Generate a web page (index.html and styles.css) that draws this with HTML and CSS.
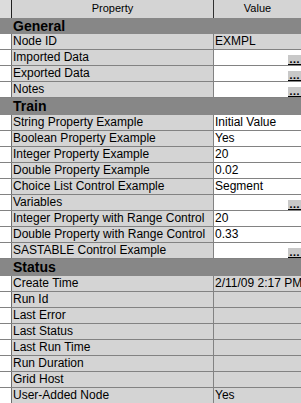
FILE: index.html
```html
<!DOCTYPE html>
<html lang="en">
<head>
  <meta charset="UTF-8" />
  <title>Properties</title>
  <link rel="stylesheet" href="styles.css">
</head>
<body>
  <div class="grid">
    <div class="head">
      <div class="gutter"></div>
      <div class="name">Property</div>
      <div class="value">Value</div>
    </div>

    <div class="cat">General</div>
    <div class="row"><div class="gutter"></div><div class="name">Node ID</div><div class="value ro">EXMPL</div></div>
    <div class="row"><div class="gutter"></div><div class="name">Imported Data</div><div class="value"><span class="more">...</span></div></div>
    <div class="row"><div class="gutter"></div><div class="name">Exported Data</div><div class="value"><span class="more">...</span></div></div>
    <div class="row"><div class="gutter"></div><div class="name">Notes</div><div class="value"><span class="more">...</span></div></div>

    <div class="cat tall">Train</div>
    <div class="row"><div class="gutter"></div><div class="name">String Property Example</div><div class="value">Initial Value</div></div>
    <div class="row"><div class="gutter"></div><div class="name">Boolean Property Example</div><div class="value">Yes</div></div>
    <div class="row"><div class="gutter"></div><div class="name">Integer Property Example</div><div class="value">20</div></div>
    <div class="row"><div class="gutter"></div><div class="name">Double Property Example</div><div class="value">0.02</div></div>
    <div class="row"><div class="gutter"></div><div class="name">Choice List Control Example</div><div class="value">Segment</div></div>
    <div class="row"><div class="gutter"></div><div class="name">Variables</div><div class="value"><span class="more">...</span></div></div>
    <div class="row"><div class="gutter"></div><div class="name">Integer Property with Range Control</div><div class="value">20</div></div>
    <div class="row"><div class="gutter"></div><div class="name">Double Property with Range Control</div><div class="value">0.33</div></div>
    <div class="row"><div class="gutter"></div><div class="name">SASTABLE Control Example</div><div class="value"><span class="more">...</span></div></div>

    <div class="cat tall">Status</div>
    <div class="row"><div class="gutter"></div><div class="name">Create Time</div><div class="value ro">2/11/09 2:17 PM</div></div>
    <div class="row"><div class="gutter"></div><div class="name">Run Id</div><div class="value ro"></div></div>
    <div class="row"><div class="gutter"></div><div class="name">Last Error</div><div class="value ro"></div></div>
    <div class="row"><div class="gutter"></div><div class="name">Last Status</div><div class="value ro"></div></div>
    <div class="row"><div class="gutter"></div><div class="name">Last Run Time</div><div class="value ro"></div></div>
    <div class="row"><div class="gutter"></div><div class="name">Run Duration</div><div class="value ro"></div></div>
    <div class="row"><div class="gutter"></div><div class="name">Grid Host</div><div class="value ro"></div></div>
    <div class="row"><div class="gutter"></div><div class="name">User-Added Node</div><div class="value ro">Yes</div></div>
  </div>
</body>
</html>
```

FILE: styles.css
```css
body {
  margin: 0;
  font-family: 'Liberation Sans', Arial, sans-serif;
  font-size: 12px;
  color: #000;
  background: #fff;
  overflow: hidden;
}

.grid {
  width: 301px;
}

.head {
  display: flex;
  height: 18px;
  background: #d4d4d4;
  font-size: 11px;
  line-height: 17px;
}

.head .gutter {
  width: 11px;
  background: #dcdcdc;
  border-right: 1px solid #202020;
}

.head .name {
  width: 201px;
  text-align: center;
  border-right: 1px solid #303030;
}

.head .value {
  flex: 1;
  text-align: center;
}

.cat {
  height: 16px;
  line-height: 16px;
  background: #878787;
  font-size: 14px;
  font-weight: bold;
  padding-left: 13px;
}

.cat.tall {
  height: 17px;
  line-height: 17px;
}

.row {
  display: flex;
  height: 15px;
  line-height: 15px;
  border-bottom: 1px solid #828282;
}

.row .gutter {
  width: 11px;
  background: #fff;
  border-right: 1px solid #6e6e6e;
}

.row .name {
  width: 200px;
  padding-left: 1px;
  background: #d4d4d4;
  border-right: 1px solid #828282;
  white-space: nowrap;
  overflow: hidden;
}

.row .value {
  flex: 1;
  padding-left: 1px;
  background: #fff;
  white-space: nowrap;
  overflow: hidden;
  display: flex;
  align-items: flex-end;
}

.row .value.ro {
  background: #d4d4d4;
}

.more {
  margin-left: auto;
  width: 13px;
  height: 10px;
  background: #c8c8c8;
  border-bottom: 1px solid #000;
  font-family: 'DejaVu Sans', sans-serif;
  font-size: 9px;
  font-weight: bold;
  line-height: 6px;
  text-align: center;
  overflow: hidden;
  padding-top: 2px;
  box-sizing: border-box;
}
```
